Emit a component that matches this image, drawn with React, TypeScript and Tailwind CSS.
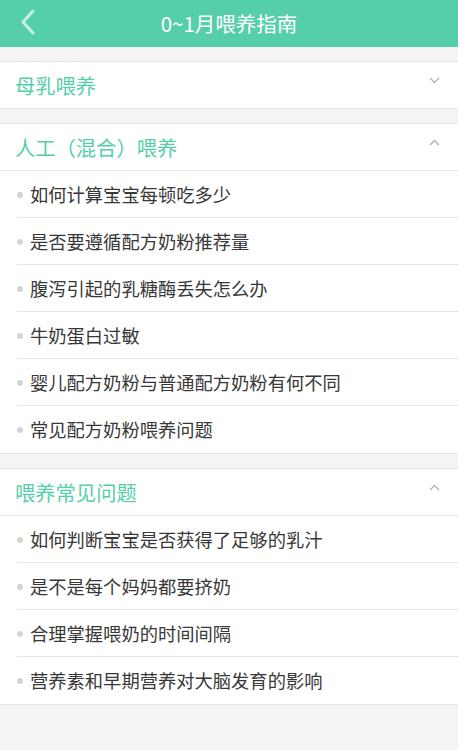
import React from "react";

const font = { fontFamily: '"Noto Sans CJK SC", "Noto Sans", sans-serif' };

function Chevron({ up }: { up?: boolean }) {
  return (
    <svg width="11" height="7" viewBox="0 0 11 7" className="block">
      <path
        d={up ? "M1 6 L5.5 1.5 L10 6" : "M1 1 L5.5 5.5 L10 1"}
        fill="none"
        stroke="#b0b0b0"
        strokeWidth="1.3"
      />
    </svg>
  );
}

function Section({ title, up, items }: { title: string; up?: boolean; items?: string[] }) {
  return (
    <div className="bg-white border-y border-[#e3e3e3]">
      <div className="h-[46px] flex items-center justify-between pl-[15px] pr-[18px]">
        <span className="text-[20.3px] text-[#55cfaa] leading-none">{title}</span>
        <div className="-mt-[10px]">
          <Chevron up={up} />
        </div>
      </div>
      {items && (
        <div className="border-t border-[#e6e6e6]">
          {items.map((t, i) => (
            <div key={t} className="pl-[17px]">
              <div
                className={
                  "h-[47px] flex items-center " +
                  (i < items.length - 1 ? "border-b border-[#e6e6e6]" : "")
                }
              >
                <span className="w-[6px] h-[6px] rounded-full bg-[#d4d4d4] mr-[7px] mt-[1px]" />
                <span className="text-[18.3px] text-[#383838] leading-none">{t}</span>
              </div>
            </div>
          ))}
        </div>
      )}
    </div>
  );
}

export default function App() {
  return (
    <div className="w-[458px] h-[750px] bg-[#f4f4f4] flex flex-col" style={font}>
      <div className="h-[47px] bg-[#55cfaa] flex items-center relative shrink-0">
        <svg width="20" height="28" viewBox="0 0 20 28" className="absolute left-[19px] top-[9px]">
          <path d="M14 2 L4 13 L14 24" fill="none" stroke="#c8efe2" strokeWidth="3" strokeLinecap="round" strokeLinejoin="round" />
        </svg>
        <div className="flex-1 text-center text-white text-[20.5px] leading-none">0~1月喂养指南</div>
      </div>
      <div className="h-[14px] shrink-0" />
      <Section title="母乳喂养" />
      <div className="h-[14px] shrink-0" />
      <Section
        title="人工（混合）喂养"
        up
        items={[
          "如何计算宝宝每顿吃多少",
          "是否要遵循配方奶粉推荐量",
          "腹泻引起的乳糖酶丢失怎么办",
          "牛奶蛋白过敏",
          "婴儿配方奶粉与普通配方奶粉有何不同",
          "常见配方奶粉喂养问题",
        ]}
      />
      <div className="h-[14px] shrink-0" />
      <Section
        title="喂养常见问题"
        up
        items={[
          "如何判断宝宝是否获得了足够的乳汁",
          "是不是每个妈妈都要挤奶",
          "合理掌握喂奶的时间间隔",
          "营养素和早期营养对大脑发育的影响",
        ]}
      />
    </div>
  );
}
